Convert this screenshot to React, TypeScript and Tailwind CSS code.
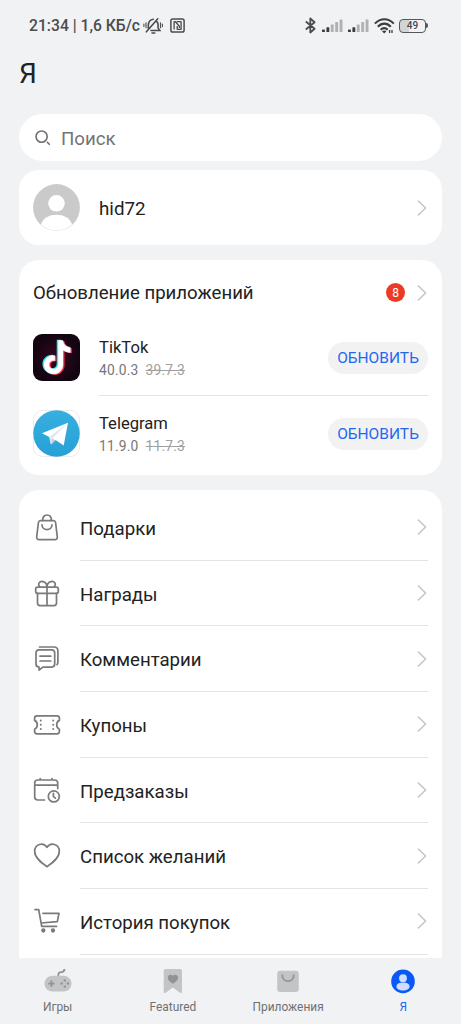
import type { ReactNode } from 'react';

interface AppUpdate {
  name: string;
  version: string;
  oldVersion: string;
  icon: ReactNode;
}

interface MenuItem {
  label: string;
  icon: ReactNode;
}

const Chevron = () => (
  <svg className="w-[10px] h-[18px] shrink-0" viewBox="0 0 10 18" fill="none" stroke="#c6c6c6" strokeWidth="1.6">
    <path d="M1.4 2 8.6 9l-7.2 7" strokeLinecap="round" strokeLinejoin="round" />
  </svg>
);

const LineIcon = ({ children }: { children: ReactNode }) => (
  <svg
    className="w-7 h-7 shrink-0"
    viewBox="0 0 28 28"
    fill="none"
    stroke="#7a7a7a"
    strokeWidth="1.7"
    strokeLinecap="round"
    strokeLinejoin="round"
  >
    {children}
  </svg>
);

const SignalIcon = () => (
  <svg className="w-[21px] h-[14px]" viewBox="0 0 21 14">
    <rect x="0" y="10.6" width="2.9" height="2.4" rx=".6" fill="#3c3d3f" />
    <rect x="4.4" y="8.2" width="2.9" height="4.8" rx=".6" fill="#3c3d3f" />
    <rect x="8.8" y="5.6" width="2.9" height="7.4" rx=".6" fill="#b0b1b3" />
    <rect x="13.2" y="3" width="2.9" height="10" rx=".6" fill="#b0b1b3" />
    <rect x="17.6" y=".4" width="2.9" height="12.6" rx=".6" fill="#b0b1b3" />
  </svg>
);

const StatusBar = () => (
  <div className="h-[51px] shrink-0 flex items-center justify-between pl-[29px] pr-[32px] text-[#4b4c4e]">
    <div className="flex items-center">
      <span className="w-[114px] whitespace-nowrap pt-px text-[15.7px] font-medium leading-5">21:34 | 1,6 КБ/с</span>
      <svg className="w-5 h-[18px]" viewBox="0 0 20 18" fill="none" stroke="currentColor" strokeWidth="1.6" strokeLinecap="round">
        <path d="M5.3 11.4V8.2C5.5 4.8 7.5 2.6 10.3 2.2M13.8 4.6c.9 1 1.3 2 1.3 3.2v3.3l1.7 2.4H8M9 16h2.8M3.4 14.8 14.8 1.8" />
        <path d="M3 5.8v5M.9 7v2.6M17.5 5.8v5M19.4 7v2.6" strokeWidth="1.1" />
      </svg>
      <svg className="w-[15px] h-[15px] ml-[7px]" viewBox="0 0 15 15" fill="none" stroke="currentColor" strokeWidth="1.5" strokeLinejoin="round">
        <rect x=".9" y=".9" width="13.2" height="13.2" rx="1.8" />
        <path d="M4.1 11.6V3.7h1.3l4 4.5v1.9M6.7 3.7h4.4v7.6H7.2V8" strokeWidth="1.3" />
      </svg>
    </div>
    <div className="flex items-center">
      <svg className="w-[11px] h-[17px] mr-[6px]" viewBox="0 0 11 17" fill="none" stroke="currentColor" strokeWidth="1.8" strokeLinejoin="round">
        <path d="m.8 4.5 8.8 7.3-4.3 3.7v-14l4.3 3.7-8.8 7.3" />
      </svg>
      <SignalIcon />
      <div className="w-[5px]" />
      <SignalIcon />
      <svg className="w-[21px] h-4 ml-[5px]" viewBox="0 0 21 16" fill="none" stroke="#3c3d3f" strokeWidth="2.1">
        <path d="M.9 5.6C6.3-.3 14.4-.3 19.8 5.6M3.8 8.8c4-4.2 9-4.2 13 0M6.7 11.8c2.2-2.3 4.8-2.3 7 0" />
        <path d="m8 13.3 2.2 2.1 2.2-2.1q-2.2-1.7-4.4 0Z" fill="#3c3d3f" stroke="none" />
        <path d="M15.6 12v3M18 12v3" strokeWidth="1.3" />
      </svg>
      <div className="flex items-center ml-[4px] mr-px">
        <div className="w-[27px] h-[14px] rounded-[4px] border-[1.5px] border-[#55565a] bg-linear-to-r from-[#d3d4d6] from-35% to-transparent to-35% flex items-center justify-center text-[10px] font-medium leading-none text-[#47484a]">
          49
        </div>
        <div className="w-[2px] h-[5px] rounded-r-sm bg-[#55565a]" />
      </div>
    </div>
  </div>
);

const TikTokIcon = () => {
  const note = 'M25.1 6h4.6c.6 3.9 3.1 6.4 7.4 7v5c-2.9 0-5.3-.9-7.3-2.5v14.2c0 6.2-4.5 9.9-9.6 9.9-5.3 0-9.4-4.2-9.4-9.3 0-5.8 4.8-9.9 10.8-9.2v5c-3.1-.7-5.7 1.2-5.7 4.1 0 2.5 2 4.2 4.4 4.2 2.8 0 4.8-1.8 4.8-5Z';
  return (
    <svg className="w-[47px] h-[47px]" viewBox="0 0 47 47">
      <defs>
        <radialGradient id="tiktokBg">
          <stop offset="0" stopColor="#35081e" />
          <stop offset="1" stopColor="#130411" />
        </radialGradient>
      </defs>
      <rect width="47" height="47" rx="9" fill="url(#tiktokBg)" />
      <path d={note} fill="#23e5e0" transform="translate(-1.4 -.2)" />
      <path d={note} fill="#f5224f" transform="translate(1.8 1.2)" />
      <path d={note} fill="#ffffff" stroke="#ffffff" strokeWidth=".5" transform="translate(.2 .5)" />
    </svg>
  );
};

const TelegramIcon = () => (
  <svg className="w-[47px] h-[47px]" viewBox="0 0 47 47">
    <defs>
      <linearGradient id="telegramBg" x1="0" y1="0" x2="0" y2="1">
        <stop offset="0" stopColor="#37afdf" />
        <stop offset="1" stopColor="#26a0d6" />
      </linearGradient>
    </defs>
    <rect x=".5" y=".5" width="46" height="46" rx="9" fill="#ffffff" stroke="#e3e6e8" strokeWidth=".8" />
    <circle cx="23.5" cy="23.5" r="23.2" fill="url(#telegramBg)" />
    <path d="m9 23.3 26-10.5-4.3 22.6-8.2-5.5-4.2 4.5-2-7.4Z" fill="#ffffff" />
    <path d="m16.3 27 1.4 7.3 1.8-5.7 15-15.4Z" fill="#dde9f0" />
    <path d="m17.7 34.3 1.8-5.7 3 1.8Z" fill="#b5cfde" />
  </svg>
);

const updates: AppUpdate[] = [
  { name: 'TikTok', version: '40.0.3', oldVersion: '39.7.3', icon: <TikTokIcon /> },
  { name: 'Telegram', version: '11.9.0', oldVersion: '11.7.3', icon: <TelegramIcon /> },
];

const menuItems: MenuItem[] = [
  {
    label: 'Подарки',
    icon: (
      <LineIcon>
        <path d="M7.6 6.7h12.8c1.3 0 2 .7 2.2 1.9l1.7 14.2c.2 1.7-.8 2.9-2.4 2.9H6.1c-1.6 0-2.6-1.2-2.4-2.9L5.4 8.6c.2-1.2.9-1.9 2.2-1.9Z" />
        <path d="M9.6 6.4C9.6 3 11.5 1 14 1s4.4 2 4.4 5.4M9 10.8c0 6.4 10 6.4 10 0" />
      </LineIcon>
    ),
  },
  {
    label: 'Награды',
    icon: (
      <LineIcon>
        <rect x="2.7" y="7.2" width="22.6" height="6.2" rx="1.8" />
        <path d="M4.5 13.4v9.7c0 1.6.9 2.5 2.5 2.5h14c1.6 0 2.5-.9 2.5-2.5v-9.7M14 7.2v18.4M7 7.2C4 3.8 7 .8 10 1.6c2.4.6 4 3 4 5.6 0-2.6 1.6-5 4-5.6 3-.8 6 2.2 3 5.6" />
      </LineIcon>
    ),
  },
  {
    label: 'Комментарии',
    icon: (
      <LineIcon>
        <path d="M6 4.9h12.7c2 0 3 1.1 3 3v11.2c0 1.9-1 3-3 3H9.8l-3.7 3v-3c-2 0-3.1-1.1-3.1-3V7.9c0-1.9 1-3 3-3Z" />
        <path d="M6.5 2h14.3c2.8 0 4.1 1.4 4.1 4.1V17c0 1.3-.3 2.1-.9 2.7M7 11.2h10.8M7 16h10.8" />
      </LineIcon>
    ),
  },
  {
    label: 'Купоны',
    icon: (
      <LineIcon>
        <path d="M4 4.8h20c1.6 0 2.4.9 2.4 2.5v2.1c-3.6 1.6-3.6 7.2 0 8.8v2.1c0 1.6-.8 2.5-2.4 2.5H4c-1.6 0-2.4-.9-2.4-2.5v-2.1c3.6-1.6 3.6-7.2 0-8.8V7.3c0-1.6.8-2.5 2.4-2.5Z" />
        <path d="M7.8 9.4v.1M7.8 13.7v.1M7.8 18v.1M20.2 9.4v.1M20.2 13.7v.1M20.2 18v.1" strokeWidth="2" />
      </LineIcon>
    ),
  },
  {
    label: 'Предзаказы',
    icon: (
      <LineIcon>
        <path d="M11.5 23H4.7c-2 0-3-1.1-3-3V6c0-1.9 1-3 3-3h17c2 0 3 1.1 3 3v5.4M1.7 8.2h23M7.2 1.7V3M19 1.7V3" />
        <circle cx="20.8" cy="19.4" r="5.5" />
        <path d="M20.4 16.4v3.2l2 1.6" />
      </LineIcon>
    ),
  },
  {
    label: 'Список желаний',
    icon: (
      <LineIcon>
        <path d="M14 24.7C9 21.2 1.7 16.2 1.7 9.3 1.7 2.1 10.5-.2 14 5.4c3.5-5.6 12.3-3.3 12.3 3.9 0 6.9-7.3 11.9-12.3 15.4Z" />
      </LineIcon>
    ),
  },
  {
    label: 'История покупок',
    icon: (
      <LineIcon>
        <path d="M2 1.6h3.7l3 16.8h14.8M10 5.3h16l-1.7 8.3-16.2 1.4" />
        <circle cx="10.3" cy="22.5" r="1.3" fill="#7a7a7a" />
        <circle cx="20" cy="22.5" r="1.3" fill="#7a7a7a" />
      </LineIcon>
    ),
  },
];

const navItems = [
  {
    label: 'Игры',
    active: false,
    icon: (
      <svg className="w-7 h-7" viewBox="0 0 28 28">
        <path d="M14.4 9.5c-.6-4 1-4.3 3.2-4.4 2-.1 2.8-.8 2.8-3" fill="none" stroke="#929395" strokeWidth="1.9" />
        <rect x=".5" y="8.8" width="27" height="15.8" rx="7.9" fill="#c3c4c6" />
        <path d="M7.4 13.5v6.2M4.3 16.6h6.2" stroke="#929395" strokeWidth="1.9" />
        <g fill="#929395">
          <circle cx="20.8" cy="13.4" r="1.2" />
          <circle cx="20.8" cy="19.6" r="1.2" />
          <circle cx="17.7" cy="16.5" r="1.2" />
          <circle cx="23.9" cy="16.5" r="1.2" />
        </g>
      </svg>
    ),
  },
  {
    label: 'Featured',
    active: false,
    icon: (
      <svg className="w-7 h-7" viewBox="0 0 28 28">
        <path d="M6.7 2h14.3c1.3 0 2 .7 2 2v20.8c0 1.3-1 1.7-2 .9l-7.2-5.3-7.1 5.3c-1 .8-2 .4-2-.9V4c0-1.3.7-2 2-2Z" fill="#c3c4c6" />
        <path d="M13.9 16.8C10.7 14.7 8.7 12.9 8.7 10.5c0-3 3.7-3.9 5.2-1.5 1.5-2.4 5.2-1.5 5.2 1.5 0 2.4-2 4.2-5.2 6.3Z" fill="#929395" />
      </svg>
    ),
  },
  {
    label: 'Приложения',
    active: false,
    icon: (
      <svg className="w-7 h-7" viewBox="0 0 28 28">
        <rect x="3.2" y="3.8" width="21.6" height="21.2" rx="3" fill="#c3c4c6" />
        <path d="M8.3 8.2c0 7.9 11.4 7.9 11.4 0" fill="none" stroke="#929395" strokeWidth="1.8" strokeLinecap="round" />
      </svg>
    ),
  },
  {
    label: 'Я',
    active: true,
    icon: (
      <svg className="w-7 h-7" viewBox="0 0 28 28">
        <circle cx="14" cy="14.4" r="11.8" fill="#0a59f7" />
        <circle cx="14" cy="11.2" r="3.9" fill="#cfdefd" />
        <path d="M7.4 19.6c0-3 3-4.2 6.6-4.2s6.6 1.2 6.6 4.2c0 2.4-3 4-6.6 4s-6.6-1.6-6.6-4Z" fill="#cfdefd" />
      </svg>
    ),
  },
];

const App = () => {
  return (
    <div className="w-[461px] h-[1024px] overflow-hidden flex flex-col bg-[#f1f2f4] text-[#222222] font-[Roboto,sans-serif]">
      <StatusBar />

      <h1 className="h-[63px] shrink-0 pl-[19px] pt-[7px] text-[28px] leading-8">Я</h1>

      <main className="flex-1 min-h-0 overflow-hidden px-[19px]">
        <div className="h-[47px] rounded-full bg-white flex items-center pl-4">
          <svg className="w-4 h-4 mr-[10px]" viewBox="0 0 16 16" fill="none" stroke="#6f6f6f" strokeWidth="1.6" strokeLinecap="round">
            <circle cx="6.6" cy="6.6" r="5.6" />
            <path d="m12.3 12.3 2 2" />
          </svg>
          <span className="pt-[2px] text-[18.7px] leading-6 text-[#747474]">Поиск</span>
        </div>

        <div className="mt-[9px] h-[75px] rounded-[20px] bg-white flex items-center pl-[14px] pr-[15px]">
          <svg className="w-[47px] h-[47px]" viewBox="0 0 47 47">
            <circle cx="23.5" cy="23.5" r="23.4" fill="#cacaca" />
            <circle cx="23.5" cy="19.3" r="8.3" fill="#ffffff" />
            <path d="M8 40.5C10 34 16 30.7 23.5 30.7S37 34 39 40.5a22.6 22.6 0 0 1-31 0Z" fill="#ffffff" />
          </svg>
          <span className="flex-1 ml-[19px] pt-[2px] text-[18.8px] leading-6">hid72</span>
          <Chevron />
        </div>

        <section className="mt-[15px] h-[215px] rounded-[20px] bg-white pl-[14px]">
          <div className="h-[60px] pt-[5px] pr-[15px] flex items-center">
            <h2 className="flex-1 pt-px text-[18.6px] leading-6">Обновление приложений</h2>
            <span className="w-[19px] h-[19px] mr-3 rounded-full bg-[#eb3b24] text-white text-[12px] leading-none flex items-center justify-center">
              8
            </span>
            <Chevron />
          </div>
          {updates.map((app, index) => (
            <div key={app.name} className="flex h-[75.5px] items-center">
              {app.icon}
              <div
                className={`ml-[19px] mr-[14px] h-full flex-1 flex items-center justify-between ${
                  index < updates.length - 1 ? 'border-b border-[#e4e4e4]' : ''
                }`}
              >
                <div className="pt-[4px]">
                  <p className="text-[16.6px] leading-[23px]">{app.name}</p>
                  <p className="text-[13.8px] leading-[23px] tracking-[0.2px] text-[#777777]">
                    {app.version}
                    <span className="ml-[7px] text-[#a0a0a0] line-through">{app.oldVersion}</span>
                  </p>
                </div>
                <button className="mt-px w-[100px] h-8 rounded-full bg-[#f2f2f2] pt-px text-[#1f69ee] text-[15.5px] leading-none">
                  ОБНОВИТЬ
                </button>
              </div>
            </div>
          ))}
        </section>

        <section className="mt-[15px] rounded-t-[20px] bg-white pt-[5px] pl-[14px] pr-[14px] pb-5">
          {menuItems.map((item) => (
            <div key={item.label} className="flex h-[65.7px] items-center">
              {item.icon}
              <div className="ml-[19px] h-full flex-1 flex items-center justify-between border-b border-[#e4e4e4] pr-px">
                <span className="pt-[3px] text-[18.65px] leading-6">{item.label}</span>
                <Chevron />
              </div>
            </div>
          ))}
        </section>
      </main>

      <nav className="h-[66px] shrink-0 grid grid-cols-4 bg-[#f1f2f4]">
        {navItems.map((item) => (
          <div key={item.label} className="flex flex-col items-center pt-[9px]">
            {item.icon}
            <span className={`mt-1 text-[11.9px] leading-4 ${item.active ? 'text-[#1f69ee]' : 'text-[#6f7072]'}`}>
              {item.label}
            </span>
          </div>
        ))}
      </nav>
    </div>
  );
};

export default App;
